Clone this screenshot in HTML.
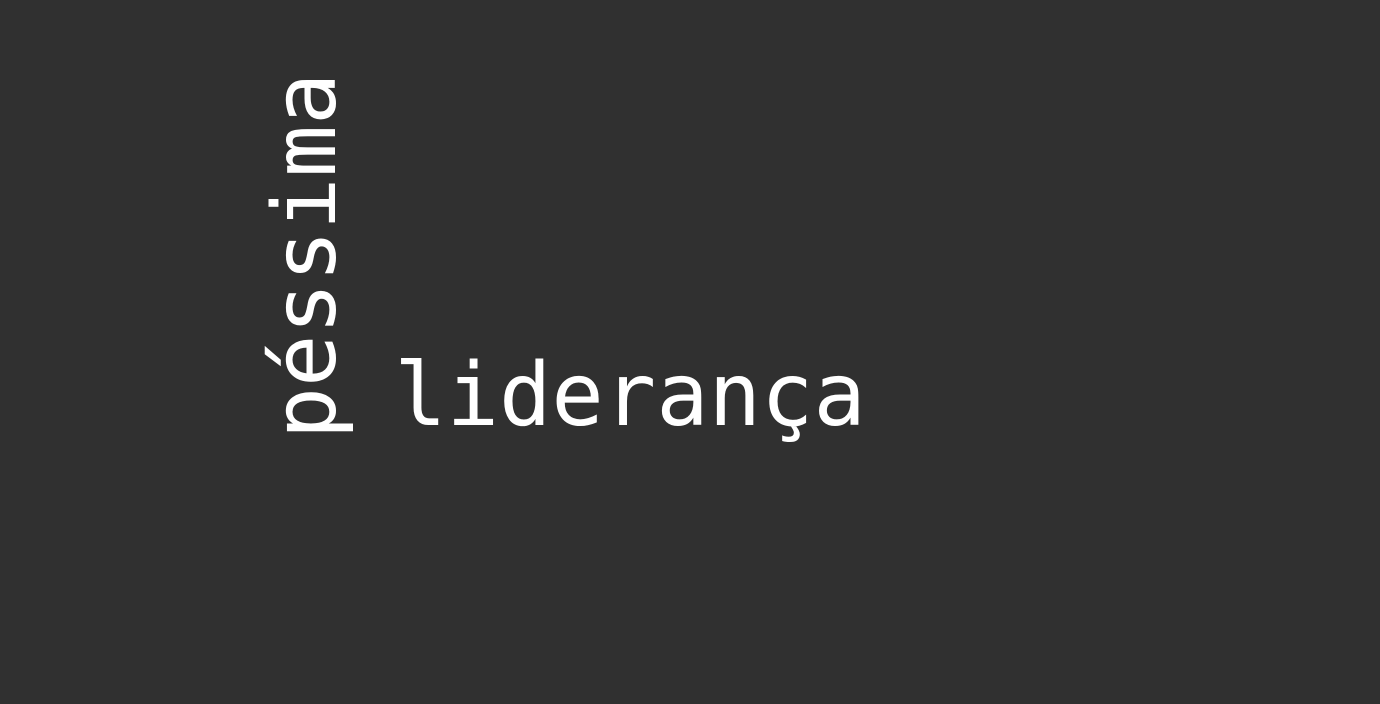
<!DOCTYPE html>
<html><head><meta charset="utf-8"><style>
html,body{margin:0;padding:0;background:#303030;}
svg{display:block}
</style></head><body>
<svg width="1380" height="704" viewBox="0 0 1380 704">
<rect width="1380" height="704" fill="#303030"/>
<text x="630" y="425" text-anchor="middle" font-family="'DejaVu Sans Mono', monospace" font-size="87" fill="#ffffff">liderança</text>
<text transform="translate(335,256) rotate(-90)" x="0" y="0" text-anchor="middle" font-family="'DejaVu Sans Mono', monospace" font-size="87" fill="#ffffff">péssima</text>
</svg>
</body></html>
